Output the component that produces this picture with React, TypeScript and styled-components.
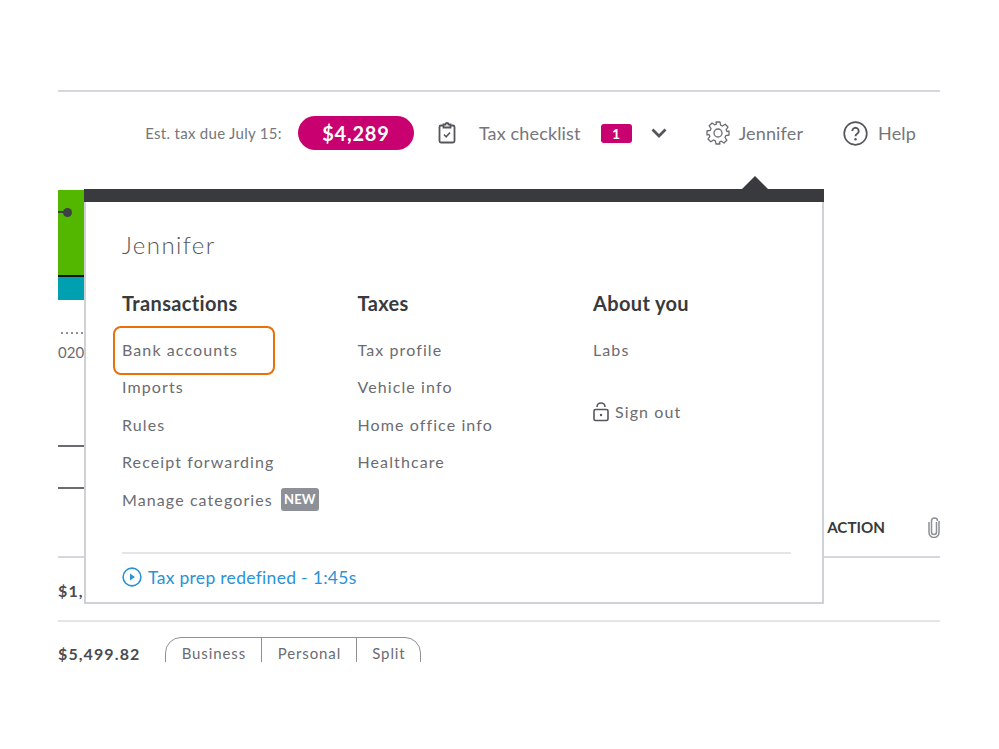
import React from "react";
import styled, { createGlobalStyle } from "styled-components";

const GlobalStyle = createGlobalStyle`
    html, body {
        margin: 0;
        padding: 0;
        background: #fff;
        font-family: "Lato", "Liberation Sans", sans-serif;
        color: #6b6c72;
    }
`;

const Page = styled.div`
    width: 999px;
    height: 749px;
    padding: 90px 59px 0 58px;
    box-sizing: border-box;
    overflow: hidden;
`;

const Frame = styled.div`
    position: relative;
    width: 882px;
    border-top: 2px solid #d4d7dc;
`;

const Toolbar = styled.header`
    display: flex;
    align-items: center;
    justify-content: flex-end;
    height: 82px;
    padding-right: 24px;
`;

const TaxLabel = styled.span`
    font-size: 15px;
    letter-spacing: 0.3px;
    color: #75767b;
    margin-right: 16px;
`;

const TaxPill = styled.span`
    display: flex;
    align-items: center;
    justify-content: center;
    width: 116px;
    height: 34px;
    border-radius: 17px;
    background: #c9006f;
    color: #fff;
    font-size: 20px;
    font-weight: 700;
    letter-spacing: 0.8px;
    margin-right: 24px;
`;

const ToolText = styled.span<{ $gap?: number }>`
    font-size: 18px;
    letter-spacing: 0.15px;
    color: #75767b;
    margin-left: ${(props) => props.$gap ?? 0}px;
`;

const IconSlot = styled.span<{ $gap?: number }>`
    display: flex;
    margin-left: ${(props) => props.$gap ?? 0}px;
`;

const CountBadge = styled.span`
    display: flex;
    align-items: center;
    justify-content: center;
    width: 31px;
    height: 19px;
    margin-left: 20px;
    border-radius: 3px;
    background: #c9006f;
    color: #fff;
    font-size: 14px;
    font-weight: 700;
`;

const Backdrop = styled.section`
    display: flex;
    flex-direction: column;
`;

const ChartBlock = styled.div`
    position: relative;
    width: 40px;
    height: 110px;
    display: flex;
    flex-direction: column;
    margin-top: 16px;
`;

const GreenBar = styled.div`
    height: 85px;
    background: #53b700;
`;

const BaseLine = styled.div`
    height: 2px;
    background: #111;
`;

const TealBar = styled.div`
    height: 23px;
    background: #00a0b0;
`;

const Marker = styled.span`
    position: absolute;
    left: 5px;
    top: 18px;
    width: 9px;
    height: 9px;
    border-radius: 50%;
    background: #3f4045;
    &::before {
        content: "";
        position: absolute;
        left: -5px;
        top: 3px;
        width: 6px;
        height: 2px;
        background: #3f4045;
    }
`;

const AxisDots = styled.div`
    width: 24px;
    height: 2px;
    margin: 32px 0 0 3px;
    background: repeating-linear-gradient(to right, #8d9096 0 2px, transparent 2px 5px);
`;

const AxisLabel = styled.div`
    font-size: 15px;
    line-height: 18px;
    margin-top: 9px;
    color: #6b6c72;
`;

const Tick = styled.div<{ $top: number }>`
    width: 30px;
    height: 2px;
    margin-top: ${(props) => props.$top}px;
    background: #6b6c72;
`;

const TableHead = styled.div`
    display: flex;
    align-items: center;
    justify-content: flex-end;
    height: 28px;
    margin-top: 24px;
    color: #393a3d;
    font-size: 15.2px;
    font-weight: 700;
`;

const ClipSlot = styled.span`
    display: flex;
    margin-left: 42px;
    margin-right: -1px;
`;

const Rule = styled.div<{ $top: number; $strong?: boolean }>`
    height: 2px;
    margin-top: ${(props) => props.$top}px;
    background: ${(props) => (props.$strong ? "#d4d7dc" : "#e3e5e8")};
`;

const AmountRow = styled.div<{ $height: number }>`
    display: flex;
    align-items: flex-start;
    height: ${(props) => props.$height}px;
`;

const Amount = styled.span<{ $top: number }>`
    font-size: 16px;
    font-weight: 700;
    color: #4a4b50;
    letter-spacing: 1.1px;
    line-height: 20px;
    margin-top: ${(props) => props.$top}px;
`;

const SegmentClip = styled.div`
    height: 25px;
    margin: 15px 0 0 25px;
    overflow: hidden;
`;

const Segments = styled.div`
    display: flex;
    height: 40px;
    border: 1px solid #8d9096;
    border-radius: 16px;
`;

const Segment = styled.span<{ $width: number }>`
    display: block;
    width: ${(props) => props.$width}px;
    padding-top: 5px;
    text-align: center;
    font-size: 15px;
    letter-spacing: 0.9px;
    line-height: 20px;
    color: #6b6c72;
    & + & {
        border-left: 1px solid #8d9096;
    }
`;

const Popover = styled.div`
    position: absolute;
    left: 26px;
    top: 97px;
    width: 740px;
    display: flex;
    flex-direction: column;
    background: #fff;
`;

const PopoverBar = styled.div`
    position: relative;
    height: 13px;
    background: #393a3d;
    &::before {
        content: "";
        position: absolute;
        right: 56px;
        top: -13px;
        border-left: 13px solid transparent;
        border-right: 13px solid transparent;
        border-bottom: 13px solid #393a3d;
    }
`;

const PopoverBody = styled.div`
    height: 402px;
    box-sizing: border-box;
    display: flex;
    flex-direction: column;
    border: 2px solid #cfd1d5;
    border-top: 0;
    padding: 0 31px 0 36px;
`;

const UserName = styled.div`
    font-size: 24px;
    font-weight: 300;
    letter-spacing: 1.4px;
    line-height: 30px;
    margin-top: 28px;
    color: #55565b;
`;

const Columns = styled.div`
    display: grid;
    grid-template-columns: repeat(3, 235.5px);
    margin-top: 31px;
    height: 261px;
`;

const Column = styled.div`
    display: flex;
    flex-direction: column;
`;

const ColumnTitle = styled.div`
    font-size: 20px;
    font-weight: 700;
    letter-spacing: 0.35px;
    line-height: 24px;
    color: #393a3d;
    margin-bottom: 15.5px;
`;

const MenuItem = styled.a<{ $outlined?: boolean; $gap?: number }>`
    position: relative;
    display: flex;
    align-items: center;
    height: 37.5px;
    margin-top: ${(props) => props.$gap ?? 0}px;
    font-size: 16px;
    letter-spacing: 1.1px;
    color: #6b6c72;
    ${(props) =>
        props.$outlined &&
        `&::after {
            content: "";
            position: absolute;
            left: -9px;
            top: -4.5px;
            width: 158px;
            height: 45px;
            border: 2px solid #e8710a;
            border-radius: 8px;
        }`}
`;

const NewTag = styled.span`
    display: inline-flex;
    align-items: center;
    justify-content: center;
    width: 38px;
    height: 23px;
    margin-left: 8px;
    border-radius: 3px;
    background: #8d9096;
    color: #fff;
    font-size: 13px;
    font-weight: 700;
    letter-spacing: 0.2px;
`;

const LockSlot = styled.span`
    display: flex;
    margin-right: 6px;
`;

const Footer = styled.div`
    display: flex;
    align-items: center;
    height: 50px;
    box-sizing: border-box;
    padding-bottom: 2px;
    border-top: 2px solid #e3e5e8;
    color: #2a93d5;
    font-size: 17.5px;
    letter-spacing: 0.3px;
`;

const PlaySlot = styled.span`
    display: flex;
    margin-right: 6px;
`;

const groups = [
    { title: "Transactions", items: ["Bank accounts", "Imports", "Rules", "Receipt forwarding", "Manage categories"] },
    { title: "Taxes", items: ["Tax profile", "Vehicle info", "Home office info", "Healthcare"] },
    { title: "About you", items: ["Labs"] },
];

const ClipboardIcon = () => (
    <svg width="18" height="22" viewBox="0 0 18 22" fill="none" stroke="#55565b" strokeWidth="1.8">
        <path d="M5.5 3.5H3a1.5 1.5 0 0 0-1.5 1.5v14A1.5 1.5 0 0 0 3 20.5h12a1.5 1.5 0 0 0 1.5-1.5V5A1.5 1.5 0 0 0 15 3.5h-2.5" />
        <path d="M5.5 5.5v-3h2a1.5 1.5 0 0 1 3 0h2v3z" />
        <path d="M6 12.5l2.2 2.3L12 10.5" strokeWidth="1.5" />
    </svg>
);

const ChevronIcon = () => (
    <svg width="16" height="10" viewBox="0 0 16 10" fill="none" stroke="#55565b" strokeWidth="2.8">
        <path d="M1.5 1.5L8 8l6.5-6.5" />
    </svg>
);

const GearIcon = () => (
    <svg width="24" height="24" viewBox="0 0 24 24" fill="none" stroke="#6b6c72" strokeWidth="1.3" strokeLinejoin="round">
        <circle cx="12" cy="12" r="4" />
        <path d="M10 1h4l.6 3.2 1.9.8 2.7-1.8 2.8 2.8-1.8 2.7.8 1.9L23 10v4l-3.2.6-.8 1.9 1.8 2.7-2.8 2.8-2.7-1.8-1.9.8L14 23h-4l-.6-3.2-1.9-.8-2.7 1.8-2.8-2.8 1.8-2.7-.8-1.9L1 14v-4l3.2-.6.8-1.9-1.8-2.7 2.8-2.8 2.7 1.8 1.9-.8z" />
    </svg>
);

const HelpIcon = () => (
    <svg width="25" height="25" viewBox="0 0 25 25" fill="none" stroke="#55565b" strokeWidth="1.7">
        <circle cx="12.5" cy="12.5" r="11.3" />
        <path d="M9.3 10a3.2 3.2 0 1 1 4.8 2.8c-1 .6-1.6 1.1-1.6 2.4" strokeWidth="1.9" />
        <circle cx="12.5" cy="18.2" r="1.2" fill="#55565b" stroke="none" />
    </svg>
);

const LockIcon = () => (
    <svg width="16" height="20" viewBox="0 0 16 20" fill="none" stroke="#55565b" strokeWidth="1.6">
        <rect x="1" y="7.5" width="14" height="11" rx="1.5" />
        <path d="M4 5a4 4 0 0 1 8 0" />
        <circle cx="8" cy="13" r="1.2" fill="#55565b" stroke="none" />
    </svg>
);

const PlayIcon = () => (
    <svg width="20" height="20" viewBox="0 0 20 20" fill="none" stroke="#2a93d5" strokeWidth="1.6">
        <circle cx="10" cy="10" r="8.9" />
        <path d="M8 6.6l5 3.4-5 3.4z" fill="#2a93d5" stroke="none" />
    </svg>
);

const ClipIcon = () => (
    <svg width="14" height="22" viewBox="0 0 14 22" fill="none" stroke="#8d9096" strokeWidth="1.5">
        <path d="M9.5 6v10a2.5 2.5 0 0 1-5 0V5a3 3 0 0 1 6 0" />
        <path d="M2 6v10.5a5 5 0 0 0 10 0V5" />
    </svg>
);

export default function App() {
    return (
        <>
            <GlobalStyle />
            <Page>
                <Frame>
                    <Toolbar>
                        <TaxLabel>Est. tax due July 15:</TaxLabel>
                        <TaxPill>$4,289</TaxPill>
                        <IconSlot><ClipboardIcon /></IconSlot>
                        <ToolText $gap={23}>Tax checklist</ToolText>
                        <CountBadge>1</CountBadge>
                        <IconSlot $gap={19}><ChevronIcon /></IconSlot>
                        <IconSlot $gap={39}><GearIcon /></IconSlot>
                        <ToolText $gap={9}>Jennifer</ToolText>
                        <IconSlot $gap={40}><HelpIcon /></IconSlot>
                        <ToolText $gap={10}>Help</ToolText>
                    </Toolbar>

                    <Backdrop>
                        <ChartBlock>
                            <GreenBar />
                            <BaseLine />
                            <TealBar />
                            <Marker />
                        </ChartBlock>
                        <AxisDots />
                        <AxisLabel>020</AxisLabel>
                        <Tick $top={84} />
                        <Tick $top={40} />
                        <TableHead>
                            ACTION
                            <ClipSlot><ClipIcon /></ClipSlot>
                        </TableHead>
                        <Rule $top={15} $strong />
                        <AmountRow $height={62}>
                            <Amount $top={23}>$1,</Amount>
                        </AmountRow>
                        <Rule $top={0} />
                        <AmountRow $height={40}>
                            <Amount $top={22}>$5,499.82</Amount>
                            <SegmentClip>
                                <Segments>
                                    <Segment $width={95}>Business</Segment>
                                    <Segment $width={94}>Personal</Segment>
                                    <Segment $width={63}>Split</Segment>
                                </Segments>
                            </SegmentClip>
                        </AmountRow>
                    </Backdrop>

                    <Popover>
                        <PopoverBar />
                        <PopoverBody>
                            <UserName>Jennifer</UserName>
                            <Columns>
                                {groups.map((group) => (
                                    <Column key={group.title}>
                                        <ColumnTitle>{group.title}</ColumnTitle>
                                        {group.items.map((item) => (
                                            <MenuItem key={item} $outlined={item === "Bank accounts"}>
                                                {item}
                                                {item === "Manage categories" && <NewTag>NEW</NewTag>}
                                            </MenuItem>
                                        ))}
                                        {group.title === "About you" && (
                                            <MenuItem $gap={25}>
                                                <LockSlot><LockIcon /></LockSlot>
                                                Sign out
                                            </MenuItem>
                                        )}
                                    </Column>
                                ))}
                            </Columns>
                            <Footer>
                                <PlaySlot><PlayIcon /></PlaySlot>
                                Tax prep redefined - 1:45s
                            </Footer>
                        </PopoverBody>
                    </Popover>
                </Frame>
            </Page>
        </>
    );
}
